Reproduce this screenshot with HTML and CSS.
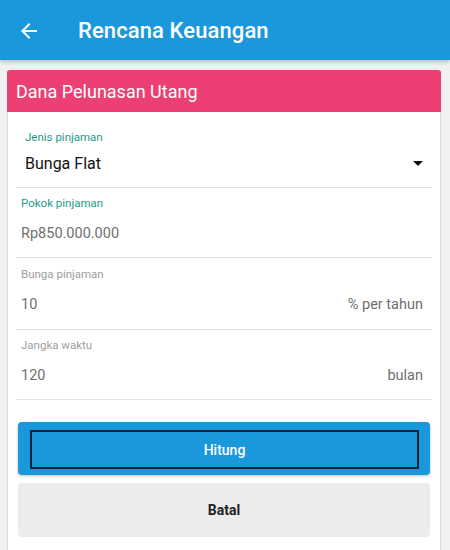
FILE: index.html
```html
<!DOCTYPE html>
<html lang="id">
<head>
<meta charset="utf-8">
<title>Rencana Keuangan</title>
<link rel="stylesheet" href="styles.css">
</head>
<body>
<header class="appbar">
  <svg class="back" viewBox="0 0 24 24" width="24" height="24"><path d="M20 11H7.83l5.59-5.59L12 4l-8 8 8 8 1.41-1.41L7.83 13H20v-2z" fill="#fff"/></svg>
  <h1 class="appbar-title">Rencana Keuangan</h1>
</header>
<main class="card">
  <div class="card-head">Dana Pelunasan Utang</div>
  <div class="form">
    <div class="field field-select">
      <div class="label label-active">Jenis pinjaman</div>
      <div class="row">
        <span class="select-value">Bunga Flat</span>
        <span class="caret"></span>
      </div>
    </div>
    <div class="field">
      <div class="label label-active">Pokok pinjaman</div>
      <div class="row"><span class="value">Rp850.000.000</span></div>
    </div>
    <div class="field field-tall">
      <div class="label">Bunga pinjaman</div>
      <div class="row"><span class="value">10</span><span class="suffix">% per tahun</span></div>
    </div>
    <div class="field">
      <div class="label">Jangka waktu</div>
      <div class="row"><span class="value">120</span><span class="suffix">bulan</span></div>
    </div>
    <div class="actions">
      <button class="btn btn-primary"><span class="focus">Hitung</span></button>
      <button class="btn btn-secondary">Batal</button>
    </div>
  </div>
</main>
</body>
</html>
```
FILE: styles.css
```css
* { box-sizing: border-box; }
html, body { margin: 0; padding: 0; }
body {
  background: #f1f1f1;
  font-family: Roboto, "Noto Sans", "Liberation Sans", sans-serif;
  width: 450px;
  height: 550px;
  overflow: hidden;
}
.appbar {
  height: 60px;
  background: #1b98dc;
  display: flex;
  align-items: center;
  padding-left: 17px;
  box-shadow: 0 2px 4px rgba(0,0,0,0.22);
  position: relative;
  z-index: 1;
}
.back { display: block; margin-top: 1px; }
.appbar-title {
  margin: 0 0 0 37px;
  color: #fff;
  font-size: 22px;
  font-weight: 500;
  letter-spacing: 0.1px;
}
.card {
  margin: 10px 9px 0 7px;
  background: #fff;
  border: 1px solid #dcdcdc;
  border-top: none;
  border-radius: 3px 3px 0 0;
  height: 490px;
}
.card-head {
  height: 42px;
  background: #ec3f74;
  color: #fff;
  font-size: 18px;
  display: flex;
  align-items: center;
  padding-left: 9px;
  border-radius: 3px 3px 0 0;
  margin: 0 -1px;
  padding-top: 1px;
}
.form { padding: 0 8px 0 8px; }
.field {
  border-bottom: 1px solid #e2e2e2;
  padding: 7px 9px 12px 5px;
}
.field-tall { padding-top: 8px; padding-bottom: 13px; }
.field-select { padding: 17px 9px 12px 9px; }
.label {
  font-size: 11.5px;
  line-height: 16px;
  color: #9e9e9e;
}
.label-active { color: #1e9b8b; }
.row {
  display: flex;
  align-items: center;
  justify-content: space-between;
  height: 24px;
  margin-top: 10px;
}
.field-select .row { margin-top: 6px; }
.select-value { font-size: 16px; color: #111; }
.caret {
  width: 0; height: 0;
  border-left: 5px solid transparent;
  border-right: 5px solid transparent;
  border-top: 5px solid #111;
  margin-right: 0;
}
.value, .suffix { font-size: 14.5px; color: #707070; }
.actions {
  padding: 22px 2px 0 2px;
  display: flex;
  flex-direction: column;
  gap: 8px;
}
.btn {
  font-family: inherit;
  font-size: 14px;
  border: none;
  border-radius: 4px;
  width: 100%;
  cursor: pointer;
}
.btn-primary {
  height: 53px;
  background: #1b98dc;
  color: #fff;
  font-weight: 500;
  padding: 8px 11px 6px 12px;
  display: flex;
  box-shadow: 0 1px 3px rgba(0,0,0,0.25);
}
.focus {
  flex: 1;
  border: 2px solid #0c2238;
  display: flex;
  align-items: center;
  justify-content: center;
}
.btn-secondary {
  height: 54px;
  background: #ececec;
  color: #222;
  font-weight: 700;
}
```
